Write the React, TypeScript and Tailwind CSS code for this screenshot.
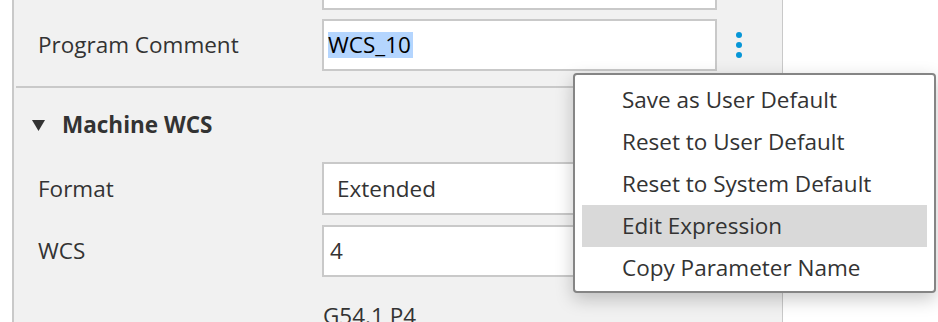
import React from 'react';

const menuItems = [
  'Save as User Default',
  'Reset to User Default',
  'Reset to System Default',
  'Edit Expression',
  'Copy Parameter Name',
];

function Kebab() {
  return (
    <div className="flex flex-col items-center gap-[4px]">
      <span className="w-[6px] h-[6px] rounded-full bg-[#0696d7]" />
      <span className="w-[6px] h-[6px] rounded-full bg-[#0696d7]" />
      <span className="w-[6px] h-[6px] rounded-full bg-[#0696d7]" />
    </div>
  );
}

export default function App() {
  return (
    <div className="relative w-[938px] h-[322px] overflow-hidden bg-white font-['Open_Sans',sans-serif] text-[22.5px] text-[#333]">
      <div className="ml-[12px] w-[771px] h-full border-l-2 border-r border-[#c9c9c9] bg-[#f1f1f1]">
        {/* field above, scrolled off */}
        <div className="ml-[308px] w-[395px] h-[10px] bg-white border-x-2 border-b-2 border-[#c9c9c9]" />

        <div className="mt-[9px] flex items-center h-[52px]">
          <div className="w-[308px] pl-[24px]">Program Comment</div>
          <div className="w-[395px] h-full bg-white border-2 border-[#c9c9c9] flex items-center pl-[4px]">
            <span className="bg-[#b4d5fe] text-black leading-[26px] pr-[2px]">WCS_10</span>
          </div>
          <div className="w-[44px] flex justify-center">
            <Kebab />
          </div>
        </div>

        <div className="mt-[15px] ml-[2px] h-[2px] bg-[#c9c9c9]" />

        <div className="h-[74px] flex items-center pl-[18px] gap-[17px]">
          <svg width="13" height="11" viewBox="0 0 13 11">
            <polygon points="0,0 13,0 6.5,11" fill="#333" />
          </svg>
          <span className="font-bold">Machine WCS</span>
        </div>

        <div className="flex items-center h-[53px]">
          <div className="w-[308px] pl-[24px]">Format</div>
          <div className="w-[395px] h-full bg-white border-2 border-[#c9c9c9] flex items-center pl-[13px]">
            Extended
          </div>
        </div>

        <div className="mt-[10px] flex items-center h-[52px]">
          <div className="w-[308px] pl-[24px]">WCS</div>
          <div className="w-[395px] h-full bg-white border-2 border-[#c9c9c9] flex items-center pl-[6px]">
            4
          </div>
        </div>

        <div className="mt-[23px] ml-[308px] pl-[1px] leading-[32px]">G54.1 P4</div>
      </div>

      <div className="absolute left-[573px] top-[73px] w-[363px] h-[220px] rounded-[4px] border-2 border-[#858585] bg-white shadow-[0_6px_18px_rgba(0,0,0,0.22)] pt-[4px]">
        {menuItems.map((item) => (
          <div
            key={item}
            className={
              'h-[42px] mx-[7px] pl-[40px] flex items-center ' +
              (item === 'Edit Expression' ? 'bg-[#d9d9d9]' : '')
            }
          >
            {item}
          </div>
        ))}
      </div>
    </div>
  );
}
